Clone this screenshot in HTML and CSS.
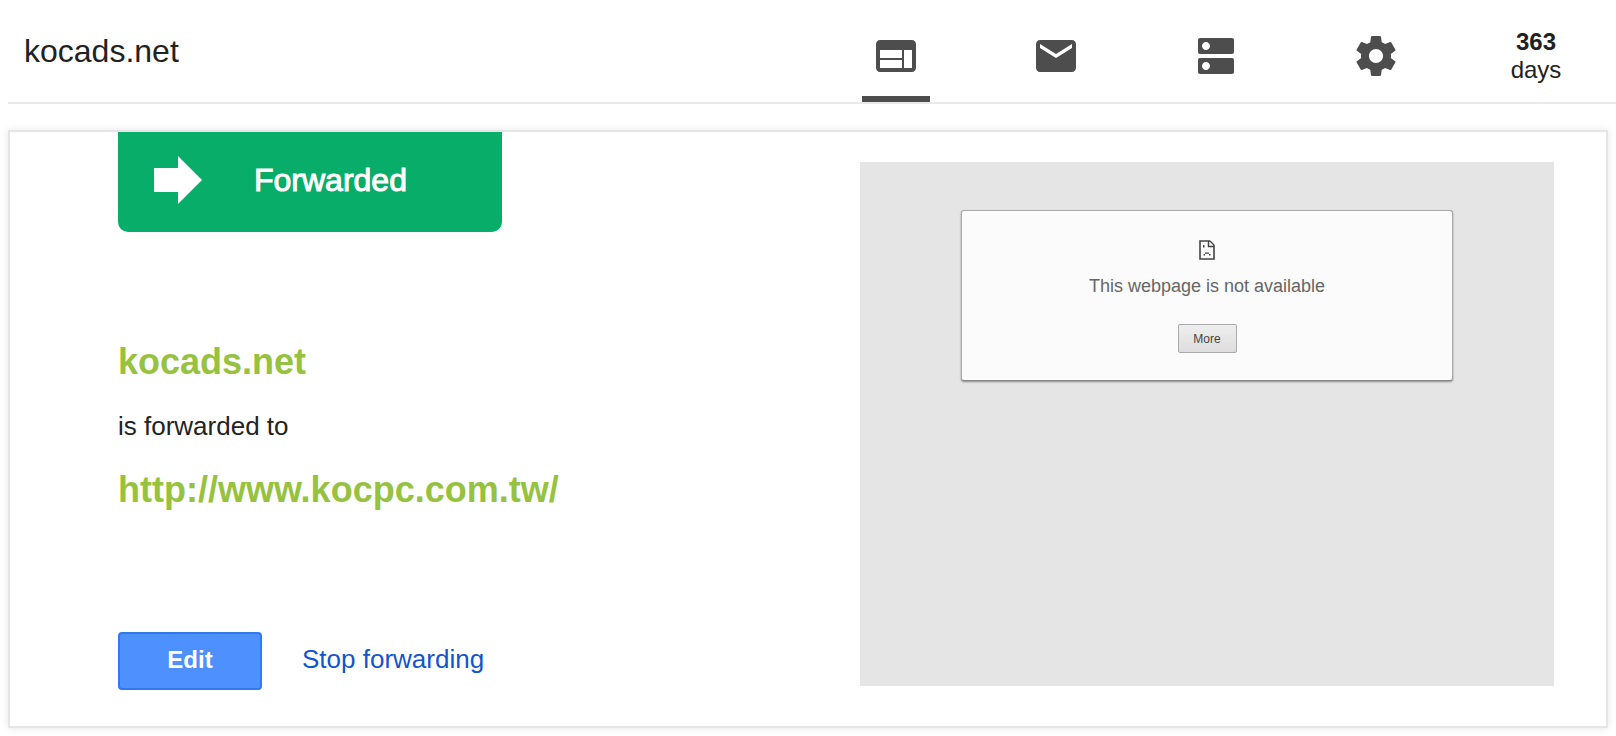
FILE: index.html
```html
<!DOCTYPE html>
<html lang="en">
	<head>
		<title>kocads.net</title>
		<meta charset="utf-8" />
		<link rel="stylesheet" href="styles.css">
	</head>
<body>
	<header class="topbar">
		<h1 class="domain">kocads.net</h1>
		<nav class="tabs">
			<a class="tab active" href="#website" aria-label="Website">
				<svg class="icon" viewBox="0 0 24 24"><path d="M20 4H4c-1.1 0-1.99.9-1.99 2L2 18c0 1.1.9 2 2 2h16c1.1 0 2-.9 2-2V6c0-1.1-.9-2-2-2zm-5 14H4v-4h11v4zm0-5H4V9h11v4zm5 5h-4V9h4v9z"/></svg>
			</a>
			<a class="tab" href="#email" aria-label="Email">
				<svg class="icon" viewBox="0 0 24 24"><path d="M20 4H4c-1.1 0-1.99.9-1.99 2L2 18c0 1.1.9 2 2 2h16c1.1 0 2-.9 2-2V6c0-1.1-.9-2-2-2zm0 4l-8 5-8-5V6l8 5 8-5v2z"/></svg>
			</a>
			<a class="tab" href="#dns" aria-label="DNS">
				<svg class="icon" viewBox="0 0 24 24"><path d="M20 13H4c-.55 0-1 .45-1 1v6c0 .55.45 1 1 1h16c.55 0 1-.45 1-1v-6c0-.55-.45-1-1-1zM7 19c-1.1 0-2-.9-2-2s.9-2 2-2 2 .9 2 2-.9 2-2 2zM20 3H4c-.55 0-1 .45-1 1v6c0 .55.45 1 1 1h16c.55 0 1-.45 1-1V4c0-.55-.45-1-1-1zM7 9c-1.1 0-2-.9-2-2s.9-2 2-2 2 .9 2 2-.9 2-2 2z"/></svg>
			</a>
			<a class="tab" href="#settings" aria-label="Settings">
				<svg class="icon" viewBox="0 0 24 24"><path d="M19.43 12.98c.04-.32.07-.64.07-.98s-.03-.66-.07-.98l2.11-1.65c.19-.15.24-.42.12-.64l-2-3.46c-.12-.22-.39-.3-.61-.22l-2.49 1c-.52-.4-1.08-.73-1.69-.98l-.38-2.65C14.46 2.18 14.25 2 14 2h-4c-.25 0-.46.18-.49.42l-.38 2.65c-.61.25-1.17.59-1.69.98l-2.49-1c-.23-.09-.49 0-.61.22l-2 3.46c-.13.22-.07.49.12.64l2.11 1.65c-.04.32-.07.65-.07.98s.03.66.07.98l-2.11 1.65c-.19.15-.24.42-.12.64l2 3.46c.12.22.39.3.61.22l2.49-1c.52.4 1.08.73 1.69.98l.38 2.65c.03.24.24.42.49.42h4c.25 0 .46-.18.49-.42l.38-2.65c.61-.25 1.17-.59 1.69-.98l2.49 1c.23.09.49 0 .61-.22l2-3.46c.12-.22.07-.49-.12-.64l-2.11-1.65zM12 15.5c-1.93 0-3.5-1.57-3.5-3.5s1.57-3.5 3.5-3.5 3.5 1.57 3.5 3.5-1.57 3.5-3.5 3.5z"/></svg>
			</a>
			<div class="days"><b>363</b>days</div>
		</nav>
	</header>
	<main class="card">
		<section class="info">
			<div class="status">
				<svg class="arrow" viewBox="0 0 48 48"><path d="M0 12h24V0l24 24-24 24V36H0z"/></svg>
				<span>Forwarded</span>
			</div>
			<div class="forward">
				<strong>kocads.net</strong>
				<span>is forwarded to</span>
				<strong>http://www.kocpc.com.tw/</strong>
			</div>
			<div class="actions">
				<button class="edit" type="button">Edit</button>
				<a class="stop" href="#stop">Stop forwarding</a>
			</div>
		</section>
		<section class="preview">
			<div class="error">
				<svg class="sad" viewBox="0 0 16 20">
					<path fill="none" stroke="#444" stroke-width="1.6" d="M11 1H1v18h14V5"/>
					<path fill="none" stroke="#444" stroke-width="1.4" d="M9.500 1v5.500H15M11 1l4 4"/>
					<path fill="#444" d="M4 5h1.500v2.500H4zM6 12.500h4v1.300H6zM4.500 14H6v1.500H4.500zM10 14h1.500v1.500H10z"/>
				</svg>
				<p>This webpage is not available</p>
				<button class="more" type="button">More</button>
			</div>
		</section>
	</main>
</body>
</html>
```

FILE: styles.css
```css
body {
	margin: 0;
	background-color: white;
	color: #222;
	font-family: "Liberation Sans", Arial, sans-serif;
	font-size: 26px;
}
.topbar {
	display: flex;
	justify-content: space-between;
	margin-left: 8px;
	border-bottom: solid 2px #e9e9e9;
}
.domain {
	margin: 0;
	padding: 32px 16px;
	font-size: 32px;
	font-weight: normal;
	line-height: 38px;
}
.tabs {
	display: flex;
	width: 800px;
}
.tab {
	flex: 1;
	display: flex;
	flex-direction: column;
	align-items: center;
	padding-top: 32px;
}
.tab.active::after {
	content: "";
	width: 68px;
	height: 6px;
	margin-top: auto;
	background-color: #4d4d4d;
}
.icon {
	width: 48px;
	height: 48px;
	fill: #4d4d4d;
}
.days {
	flex: 1;
	padding-top: 28px;
	font-size: 24px;
	line-height: 28px;
	text-align: center;
}
.days b {
	display: block;
}
.card {
	display: grid;
	grid-template-columns: 742fr 694fr;
	margin: 26px 8px 8px;
	padding: 0 52px 0 108px;
	border: solid 2px #e5e5e5;
	box-shadow: 0 0 8px rgba(0, 0, 0, 0.1);
}
.info {
	display: flex;
	flex-direction: column;
	align-items: flex-start;
	padding-bottom: 36px;
}
.status {
	box-sizing: border-box;
	display: flex;
	align-items: center;
	gap: 52px;
	width: 384px;
	height: 100px;
	padding: 0 36px 4px;
	border-radius: 0 0 10px 10px;
	background-color: #07ad68;
	color: white;
	font-size: 32px;
	-webkit-text-stroke: 1px white;
}
.arrow {
	width: 48px;
	height: 48px;
	fill: white;
	stroke: none;
}
.forward {
	display: flex;
	flex-direction: column;
	gap: 24px;
	margin-top: 110px;
	line-height: 40px;
}
.forward strong {
	color: #96c23f;
	font-size: 36px;
}
.actions {
	display: flex;
	align-items: center;
	gap: 40px;
	margin-top: auto;
}
.edit {
	width: 144px;
	height: 58px;
	padding: 0 0 2px;
	border: solid 2px #3079ed;
	border-radius: 4px;
	background-color: #4d90fe;
	color: white;
	font-family: inherit;
	font-size: 24px;
	font-weight: bold;
}
.stop {
	padding-bottom: 4px;
	color: #15c;
	text-decoration: none;
}
.preview {
	box-sizing: border-box;
	min-height: 524px;
	margin: 30px 0 40px;
	padding: 48px 101px;
	background-color: #e5e5e5;
}
.error {
	display: flex;
	flex-direction: column;
	align-items: center;
	padding: 29px 0 27px;
	border: solid 1px #aaa;
	border-bottom-color: #888;
	border-radius: 3px;
	background-color: #fbfbfb;
	box-shadow: 0 1px 2px rgba(0, 0, 0, 0.4);
}
.sad {
	width: 16px;
	height: 20px;
}
.error p {
	margin: 14px 0 26px;
	color: #666;
	font-size: 18px;
	line-height: 24px;
}
.more {
	width: 59px;
	height: 29px;
	padding: 0;
	border: solid 1px #aaa;
	border-radius: 2px;
	background-image: linear-gradient(#eee, #ddd);
	color: #444;
	font-family: inherit;
	font-size: 12px;
}
```
